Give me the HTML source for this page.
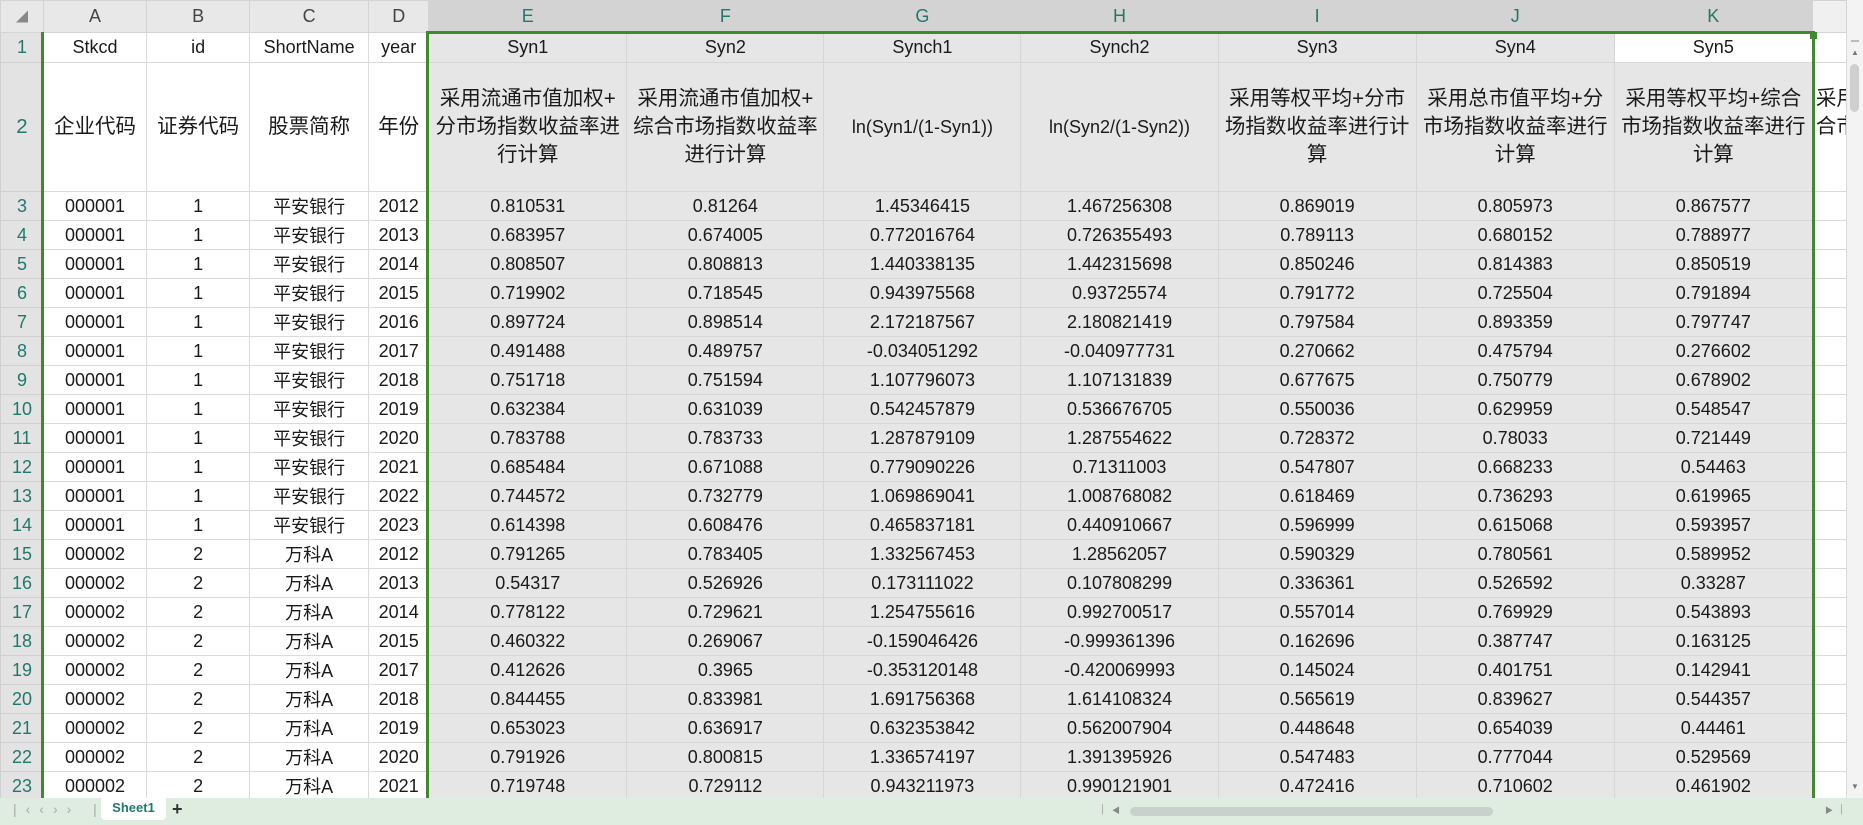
<!DOCTYPE html>
<html><head><meta charset="utf-8"><style>
*{margin:0;padding:0;box-sizing:border-box}
body{width:1863px;height:825px;overflow:hidden;background:#fff;font-family:"Liberation Sans","Noto Sans CJK SC",sans-serif;position:relative}
#grid{position:absolute;left:0;top:0;width:1847px;height:798px;overflow:hidden}
table{border-collapse:collapse;table-layout:fixed;width:1847px}
td{border:1px solid #dadada;text-align:center;font-size:18px;color:#1a1a1a;white-space:nowrap;overflow:hidden;height:29px;padding:0}
tr.h td{background:#e8e8e8;color:#444;height:32px;font-size:18px;border-color:#d4d4d4}
tr.h td.s{background:#d3d3d3;color:#1f7a6c}
td.rh{background:#e3e3e3;color:#1f7a6c;font-size:18px;border-color:#d0d0d0}
td.g{background:#e6e6e6;border-color:#d6d6d6}
tr.r2 td{height:129px;font-size:20.5px;line-height:28px;padding:0}
tr.r1 td{height:30px}
td.w{background:#fff!important}
</style></head><body>
<div id="grid"><table>
<colgroup><col style="width:43px"><col style="width:103px"><col style="width:103px"><col style="width:119px"><col style="width:60px"><col style="width:198px"><col style="width:197px"><col style="width:197px"><col style="width:197px"><col style="width:198px"><col style="width:198px"><col style="width:198px"><col style="width:34px"></colgroup>
<tr class="h"><td style="color:#888;font-size:12px">◢</td><td>A</td><td>B</td><td>C</td><td>D</td><td class="s">E</td><td class="s">F</td><td class="s">G</td><td class="s">H</td><td class="s">I</td><td class="s">J</td><td class="s">K</td><td style="background:#f0f0f0"></td></tr>
<tr class="r1"><td class="rh">1</td><td>Stkcd</td><td>id</td><td>ShortName</td><td>year</td><td class="g">Syn1</td><td class="g">Syn2</td><td class="g">Synch1</td><td class="g">Synch2</td><td class="g">Syn3</td><td class="g">Syn4</td><td class="w">Syn5</td><td></td></tr>
<tr class="r2"><td class="rh">2</td><td>企业代码</td><td>证券代码</td><td>股票简称</td><td>年份</td><td class="g">采用流通市值加权+<br>分市场指数收益率进<br>行计算</td><td class="g">采用流通市值加权+<br>综合市场指数收益率<br>进行计算</td><td class="g" style="font-size:18px">ln(Syn1/(1-Syn1))</td><td class="g" style="font-size:18px">ln(Syn2/(1-Syn2))</td><td class="g">采用等权平均+分市<br>场指数收益率进行计<br>算</td><td class="g">采用总市值平均+分<br>市场指数收益率进行<br>计算</td><td class="g">采用等权平均+综合<br>市场指数收益率进行<br>计算</td><td style="text-align:left;padding-left:3px;padding-bottom:28px">采用等权<br>合市场</td></tr>
<tr><td class="rh">3</td><td>000001</td><td>1</td><td>平安银行</td><td>2012</td><td class="g">0.810531</td><td class="g">0.81264</td><td class="g">1.45346415</td><td class="g">1.467256308</td><td class="g">0.869019</td><td class="g">0.805973</td><td class="g">0.867577</td><td></td></tr>
<tr><td class="rh">4</td><td>000001</td><td>1</td><td>平安银行</td><td>2013</td><td class="g">0.683957</td><td class="g">0.674005</td><td class="g">0.772016764</td><td class="g">0.726355493</td><td class="g">0.789113</td><td class="g">0.680152</td><td class="g">0.788977</td><td></td></tr>
<tr><td class="rh">5</td><td>000001</td><td>1</td><td>平安银行</td><td>2014</td><td class="g">0.808507</td><td class="g">0.808813</td><td class="g">1.440338135</td><td class="g">1.442315698</td><td class="g">0.850246</td><td class="g">0.814383</td><td class="g">0.850519</td><td></td></tr>
<tr><td class="rh">6</td><td>000001</td><td>1</td><td>平安银行</td><td>2015</td><td class="g">0.719902</td><td class="g">0.718545</td><td class="g">0.943975568</td><td class="g">0.93725574</td><td class="g">0.791772</td><td class="g">0.725504</td><td class="g">0.791894</td><td></td></tr>
<tr><td class="rh">7</td><td>000001</td><td>1</td><td>平安银行</td><td>2016</td><td class="g">0.897724</td><td class="g">0.898514</td><td class="g">2.172187567</td><td class="g">2.180821419</td><td class="g">0.797584</td><td class="g">0.893359</td><td class="g">0.797747</td><td></td></tr>
<tr><td class="rh">8</td><td>000001</td><td>1</td><td>平安银行</td><td>2017</td><td class="g">0.491488</td><td class="g">0.489757</td><td class="g">-0.034051292</td><td class="g">-0.040977731</td><td class="g">0.270662</td><td class="g">0.475794</td><td class="g">0.276602</td><td></td></tr>
<tr><td class="rh">9</td><td>000001</td><td>1</td><td>平安银行</td><td>2018</td><td class="g">0.751718</td><td class="g">0.751594</td><td class="g">1.107796073</td><td class="g">1.107131839</td><td class="g">0.677675</td><td class="g">0.750779</td><td class="g">0.678902</td><td></td></tr>
<tr><td class="rh">10</td><td>000001</td><td>1</td><td>平安银行</td><td>2019</td><td class="g">0.632384</td><td class="g">0.631039</td><td class="g">0.542457879</td><td class="g">0.536676705</td><td class="g">0.550036</td><td class="g">0.629959</td><td class="g">0.548547</td><td></td></tr>
<tr><td class="rh">11</td><td>000001</td><td>1</td><td>平安银行</td><td>2020</td><td class="g">0.783788</td><td class="g">0.783733</td><td class="g">1.287879109</td><td class="g">1.287554622</td><td class="g">0.728372</td><td class="g">0.78033</td><td class="g">0.721449</td><td></td></tr>
<tr><td class="rh">12</td><td>000001</td><td>1</td><td>平安银行</td><td>2021</td><td class="g">0.685484</td><td class="g">0.671088</td><td class="g">0.779090226</td><td class="g">0.71311003</td><td class="g">0.547807</td><td class="g">0.668233</td><td class="g">0.54463</td><td></td></tr>
<tr><td class="rh">13</td><td>000001</td><td>1</td><td>平安银行</td><td>2022</td><td class="g">0.744572</td><td class="g">0.732779</td><td class="g">1.069869041</td><td class="g">1.008768082</td><td class="g">0.618469</td><td class="g">0.736293</td><td class="g">0.619965</td><td></td></tr>
<tr><td class="rh">14</td><td>000001</td><td>1</td><td>平安银行</td><td>2023</td><td class="g">0.614398</td><td class="g">0.608476</td><td class="g">0.465837181</td><td class="g">0.440910667</td><td class="g">0.596999</td><td class="g">0.615068</td><td class="g">0.593957</td><td></td></tr>
<tr><td class="rh">15</td><td>000002</td><td>2</td><td>万科A</td><td>2012</td><td class="g">0.791265</td><td class="g">0.783405</td><td class="g">1.332567453</td><td class="g">1.28562057</td><td class="g">0.590329</td><td class="g">0.780561</td><td class="g">0.589952</td><td></td></tr>
<tr><td class="rh">16</td><td>000002</td><td>2</td><td>万科A</td><td>2013</td><td class="g">0.54317</td><td class="g">0.526926</td><td class="g">0.173111022</td><td class="g">0.107808299</td><td class="g">0.336361</td><td class="g">0.526592</td><td class="g">0.33287</td><td></td></tr>
<tr><td class="rh">17</td><td>000002</td><td>2</td><td>万科A</td><td>2014</td><td class="g">0.778122</td><td class="g">0.729621</td><td class="g">1.254755616</td><td class="g">0.992700517</td><td class="g">0.557014</td><td class="g">0.769929</td><td class="g">0.543893</td><td></td></tr>
<tr><td class="rh">18</td><td>000002</td><td>2</td><td>万科A</td><td>2015</td><td class="g">0.460322</td><td class="g">0.269067</td><td class="g">-0.159046426</td><td class="g">-0.999361396</td><td class="g">0.162696</td><td class="g">0.387747</td><td class="g">0.163125</td><td></td></tr>
<tr><td class="rh">19</td><td>000002</td><td>2</td><td>万科A</td><td>2017</td><td class="g">0.412626</td><td class="g">0.3965</td><td class="g">-0.353120148</td><td class="g">-0.420069993</td><td class="g">0.145024</td><td class="g">0.401751</td><td class="g">0.142941</td><td></td></tr>
<tr><td class="rh">20</td><td>000002</td><td>2</td><td>万科A</td><td>2018</td><td class="g">0.844455</td><td class="g">0.833981</td><td class="g">1.691756368</td><td class="g">1.614108324</td><td class="g">0.565619</td><td class="g">0.839627</td><td class="g">0.544357</td><td></td></tr>
<tr><td class="rh">21</td><td>000002</td><td>2</td><td>万科A</td><td>2019</td><td class="g">0.653023</td><td class="g">0.636917</td><td class="g">0.632353842</td><td class="g">0.562007904</td><td class="g">0.448648</td><td class="g">0.654039</td><td class="g">0.44461</td><td></td></tr>
<tr><td class="rh">22</td><td>000002</td><td>2</td><td>万科A</td><td>2020</td><td class="g">0.791926</td><td class="g">0.800815</td><td class="g">1.336574197</td><td class="g">1.391395926</td><td class="g">0.547483</td><td class="g">0.777044</td><td class="g">0.529569</td><td></td></tr>
<tr><td class="rh">23</td><td>000002</td><td>2</td><td>万科A</td><td>2021</td><td class="g">0.719748</td><td class="g">0.729112</td><td class="g">0.943211973</td><td class="g">0.990121901</td><td class="g">0.472416</td><td class="g">0.710602</td><td class="g">0.461902</td><td></td></tr>
<tr><td class="rh">24</td><td></td><td></td><td></td><td></td><td class="g"></td><td class="g"></td><td class="g"></td><td class="g"></td><td class="g"></td><td class="g"></td><td class="g"></td><td></td></tr>
</table></div>
<div style="position:absolute;left:41px;top:32px;width:3px;height:766px;background:#3f8a2e"></div>
<div style="position:absolute;left:426px;top:31px;width:1389px;height:780px;border:3px solid #3f8a2e;border-bottom:none"></div>
<div style="position:absolute;left:1810px;top:32px;width:7px;height:7px;background:#3f8a2e"></div>
<div style="position:absolute;left:1847px;top:0;width:16px;height:798px;background:#f3f3f3">
<div style="position:absolute;left:4px;top:40px;width:8px;height:2px;background:#bbb"></div>
<div style="position:absolute;left:4px;top:48px;font-size:8px;color:#777">▲</div>
<div style="position:absolute;left:3px;top:64px;width:9px;height:48px;border-radius:5px;background:#cfcfcf"></div>
<div style="position:absolute;left:4px;top:782px;font-size:8px;color:#777">▼</div>
</div>
<div style="position:absolute;left:0;top:798px;width:1863px;height:27px;background:#dfece0">
<div style="position:absolute;left:13px;top:3px;font-size:14px;color:#aaa;letter-spacing:9px">|‹‹›› |</div>
<div style="position:absolute;left:101px;top:0;width:65px;height:22px;background:#fff;border-radius:0 0 4px 4px;text-align:center;font-size:13px;font-weight:bold;color:#1f7a6c;line-height:20px">Sheet1</div>
<div style="position:absolute;left:172px;top:1px;font-size:18px;color:#333;font-weight:bold">+</div>
<div style="position:absolute;left:1101px;top:5px;font-size:11px;color:#aaa">|</div>
<div style="position:absolute;left:1112px;top:7px;font-size:8px;color:#888">◀</div>
<div style="position:absolute;left:1130px;top:9px;width:363px;height:9px;border-radius:5px;background:#c9d2ca"></div>
<div style="position:absolute;left:1825px;top:7px;font-size:8px;color:#888">▶</div>
<div style="position:absolute;left:1840px;top:5px;font-size:11px;color:#aaa">|</div>
</div>
</body></html>
